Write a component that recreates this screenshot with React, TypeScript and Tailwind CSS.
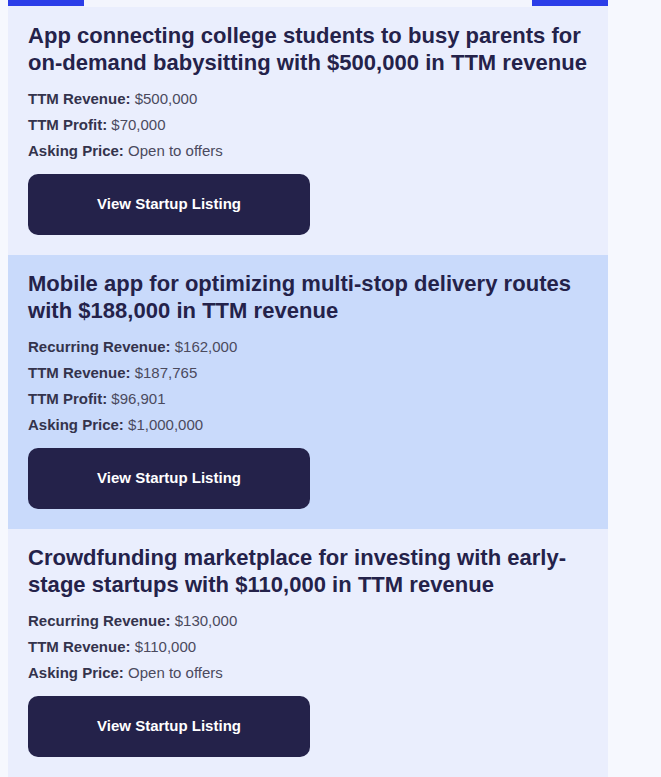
import React from "react";

type Item = { title: string; rows: [string, string][]; bg: string };

const items: Item[] = [
  {
    title:
      "App connecting college students to busy parents for on-demand babysitting with $500,000 in TTM revenue",
    rows: [
      ["TTM Revenue:", "$500,000"],
      ["TTM Profit:", "$70,000"],
      ["Asking Price:", "Open to offers"],
    ],
    bg: "a",
  },
  {
    title:
      "Mobile app for optimizing multi-stop delivery routes with $188,000 in TTM revenue",
    rows: [
      ["Recurring Revenue:", "$162,000"],
      ["TTM Revenue:", "$187,765"],
      ["TTM Profit:", "$96,901"],
      ["Asking Price:", "$1,000,000"],
    ],
    bg: "b",
  },
  {
    title:
      "Crowdfunding marketplace for investing with early-stage startups with $110,000 in TTM revenue",
    rows: [
      ["Recurring Revenue:", "$130,000"],
      ["TTM Revenue:", "$110,000"],
      ["Asking Price:", "Open to offers"],
    ],
    bg: "a",
  },
];

function Card({ item }: { item: Item }) {
  return (
    <div
      className={`pl-5 pr-3 pt-[15px] pb-5 ${
        item.bg === "a" ? "bg-[#eaeefd]" : "bg-[#c9dafb]"
      }`}
    >
      <h2 className="text-[22px] leading-[27px] font-bold text-[#24224a] tracking-[0.03px] max-w-[565px]">
        {item.title}
      </h2>
      <div className="mt-[10px] flex flex-col">
        {item.rows.map(([k, v]) => (
          <div key={k} className="text-[15px] leading-[26px] text-[#4b4a5e]">
            <span className="font-bold text-[#34334c]">{k}</span> {v}
          </div>
        ))}
      </div>
      <button className="mt-[10px] w-[282px] h-[61px] rounded-[10px] bg-[#24224a] text-white text-[15px] font-bold flex items-center justify-center">
        View Startup Listing
      </button>
    </div>
  );
}

export default function App() {
  return (
    <div
      className="min-h-[777px] bg-[#f6f8fe] pl-2"
      style={{ fontFamily: '"Liberation Sans", Arial, sans-serif' }}
    >
      <div className="w-[600px]">
        <div className="flex h-[7px] bg-[#eaeefd]">
          <div className="w-[76px] h-[6px] bg-[#2c3ee8]" />
          <div className="flex-1 h-[7px] bg-[#f3f5fd]" />
          <div className="w-[76px] h-[6px] bg-[#2c3ee8]" />
        </div>
        {items.map((it, i) => (
          <Card key={i} item={it} />
        ))}
      </div>
    </div>
  );
}
